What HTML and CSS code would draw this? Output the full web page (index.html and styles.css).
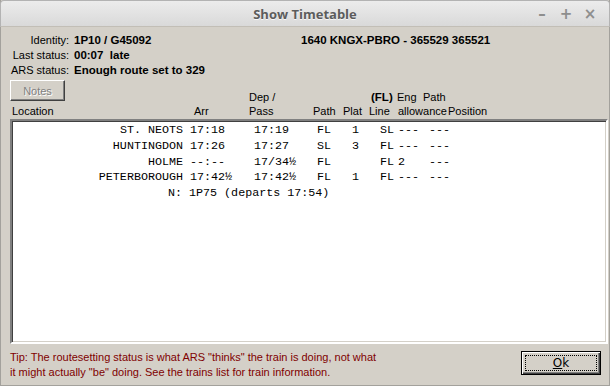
FILE: index.html
```html
<!DOCTYPE html>
<html lang="en">
<head>
<meta charset="UTF-8">
<title>Show Timetable</title>
<link rel="stylesheet" href="styles.css">
</head>
<body>
<div class="window">
    <div class="titlebar">
        <span class="title">Show Timetable</span>
        <div class="controls">
            <span class="ctl">&#8211;</span>
            <span class="ctl">+</span>
            <span class="ctl">&#215;</span>
        </div>
    </div>
    <div class="content">
        <div class="info">
            <span class="lbl">Identity:</span>
            <b>1P10 / G45092</b>
            <b>1640 KNGX-PBRO - 365529 365521</b>
            <span class="lbl">Last status:</span>
            <b>00:07&nbsp; late</b>
            <span></span>
            <span class="lbl">ARS status:</span>
            <b>Enough route set to 329</b>
            <span></span>
        </div>
        <div class="heads">
            <button class="notes" disabled>Notes</button>
            <span class="h-dep">Dep /</span>
            <b class="h-fl">(FL)</b>
            <span class="h-eng">Eng</span>
            <span class="h-path2">Path</span>
            <span class="h-loc">Location</span>
            <span class="h-arr">Arr</span>
            <span class="h-pass">Pass</span>
            <span class="h-path">Path</span>
            <span class="h-plat">Plat</span>
            <span class="h-line">Line</span>
            <span class="h-allow">allowance</span>
            <span class="h-pos">Position</span>
        </div>
        <div class="listbox">
            <div class="row">
                <span class="loc">ST. NEOTS</span><span>17:18</span><span>17:19</span><span>FL</span><span>1</span><span>SL</span><span>---</span><span>---</span>
            </div>
            <div class="row">
                <span class="loc">HUNTINGDON</span><span>17:26</span><span>17:27</span><span>SL</span><span>3</span><span>FL</span><span>---</span><span>---</span>
            </div>
            <div class="row">
                <span class="loc">HOLME</span><span>--:--</span><span>17/34½</span><span>FL</span><span></span><span>FL</span><span>2</span><span>---</span>
            </div>
            <div class="row">
                <span class="loc">PETERBOROUGH</span><span>17:42½</span><span>17:42½</span><span>FL</span><span>1</span><span>FL</span><span>---</span><span>---</span>
            </div>
            <div class="next">N: 1P75 (departs 17:54)</div>
        </div>
        <div class="footer">
            <p class="tip">Tip: The routesetting status is what ARS "thinks" the train is doing, not what it might actually "be" doing. See the trains list for train information.</p>
            <button class="ok"><span class="focus"><u>O</u>k</span></button>
        </div>
    </div>
</div>
</body>
</html>
```

FILE: styles.css
```css
* {
    margin: 0;
    padding: 0;
    box-sizing: border-box;
}
body {
    width: 610px;
    height: 386px;
    overflow: hidden;
    font-family: "Liberation Sans", Arial, sans-serif;
    font-size: 11px;
    color: #000;
}
.window {
    width: 610px;
    height: 386px;
    background: #d4d0c8;
    border: 1px solid #a3a19c;
    border-top: none;
    display: flex;
    flex-direction: column;
}
.titlebar {
    height: 27px;
    flex: none;
    position: relative;
    background: linear-gradient(#ececec, #d9d9d9);
    border: 1px solid #b3b3b3;
    border-bottom: 1px solid #c2beb6;
    border-radius: 4px 4px 0 0;
    margin: 0 -1px;
    display: flex;
    align-items: center;
    justify-content: center;
}
.title {
    font-family: "Open Sans", "DejaVu Sans", sans-serif;
    font-weight: bold;
    font-size: 13px;
    color: #5c5c5c;
    text-shadow: 0 1px 0 #f6f6f6;
}
.controls {
    position: absolute;
    right: 12px;
    top: 4px;
    display: flex;
    gap: 10px;
}
.ctl {
    font-family: "DejaVu Sans", sans-serif;
    font-size: 15px;
    font-weight: bold;
    color: #8e8e8e;
    width: 14px;
    text-align: center;
}
.content {
    flex: 1;
    display: flex;
    flex-direction: column;
    padding: 6px 2px 0 8px;
}
.info {
    display: grid;
    grid-template-columns: 60px 222px auto;
    column-gap: 5px;
    line-height: 15px;
    font-size: 11px;
}
.info b {
    font-size: 11.5px;
}
.lbl {
    text-align: right;
}
.heads {
    display: grid;
    grid-template-columns: 184px 56px 64px 30px 26px 28px 26px 25px 1fr;
    grid-template-rows: 23px 14px;
    margin-top: 3px;
    line-height: 14px;
    align-items: end;
}
.notes {
    grid-column: 1;
    grid-row: 1;
    align-self: start;
    width: 55px;
    height: 21px;
    margin-left: 1px;
    margin-top: -1px;
    font-family: "Liberation Sans", Arial, sans-serif;
    font-size: 11px;
    color: #808080;
    text-shadow: 1px 1px 0 #fff;
    background: #d4d0c8;
    border: 1px solid;
    border-color: #fff #404040 #404040 #fff;
    box-shadow: inset -1px -1px 0 #808080;
}
.h-dep { grid-column: 3; grid-row: 1; }
.h-fl { grid-column: 6; grid-row: 1; padding-left: 2px; font-size: 11.5px; }
.h-eng { grid-column: 7; grid-row: 1; }
.h-path2 { grid-column: 8 / 10; grid-row: 1; }
.h-loc { grid-column: 1; grid-row: 2; padding-left: 3px; }
.h-arr { grid-column: 2; grid-row: 2; padding-left: 1px; }
.h-pass { grid-column: 3; grid-row: 2; }
.h-path { grid-column: 4; grid-row: 2; }
.h-plat { grid-column: 5; grid-row: 2; }
.h-line { grid-column: 6; grid-row: 2; }
.h-allow { grid-column: 7 / 9; grid-row: 2; padding-left: 1px; }
.h-pos { grid-column: 9; grid-row: 2; }
.listbox {
    margin-top: 1px;
    margin-left: 1px;
    width: 598px;
    height: 225px;
    flex: none;
    background: #fff;
    border: 2px solid;
    border-color: #808080 #fff #fff #808080;
    box-shadow: inset 1px 1px 0 #404040, inset -1px -1px 0 #d4d0c8;
    padding-top: 2px;
    font-family: "Liberation Mono", "Courier New", monospace;
    font-size: 11.7px;
    line-height: 15.75px;
}
.row {
    display: grid;
    grid-template-columns: 178px 64px 63px 35px 28px 18px 31px 1fr;
    white-space: pre;
}
.row .loc {
    text-align: right;
    padding-right: 7px;
}
.next {
    padding-left: 156px;
}
.footer {
    display: flex;
    align-items: flex-start;
    padding-top: 6px;
}
.tip {
    width: 371px;
    color: #800000;
    font-size: 11px;
    line-height: 15px;
    padding-left: 1px;
}
.ok {
    width: 80px;
    height: 24px;
    margin-left: auto;
    margin-right: 6px;
    margin-top: 1px;
    background: #d4d0c8;
    border: 1px solid #000;
    box-shadow: inset 1px 1px 0 #fff, inset -1px -1px 0 #404040, inset -2px -2px 0 #808080;
    padding: 3px;
    font-family: "DejaVu Sans", Verdana, sans-serif;
    font-size: 12px;
}
.focus {
    display: block;
    height: 100%;
    border: 1px dotted #000;
    line-height: 14px;
}
```
